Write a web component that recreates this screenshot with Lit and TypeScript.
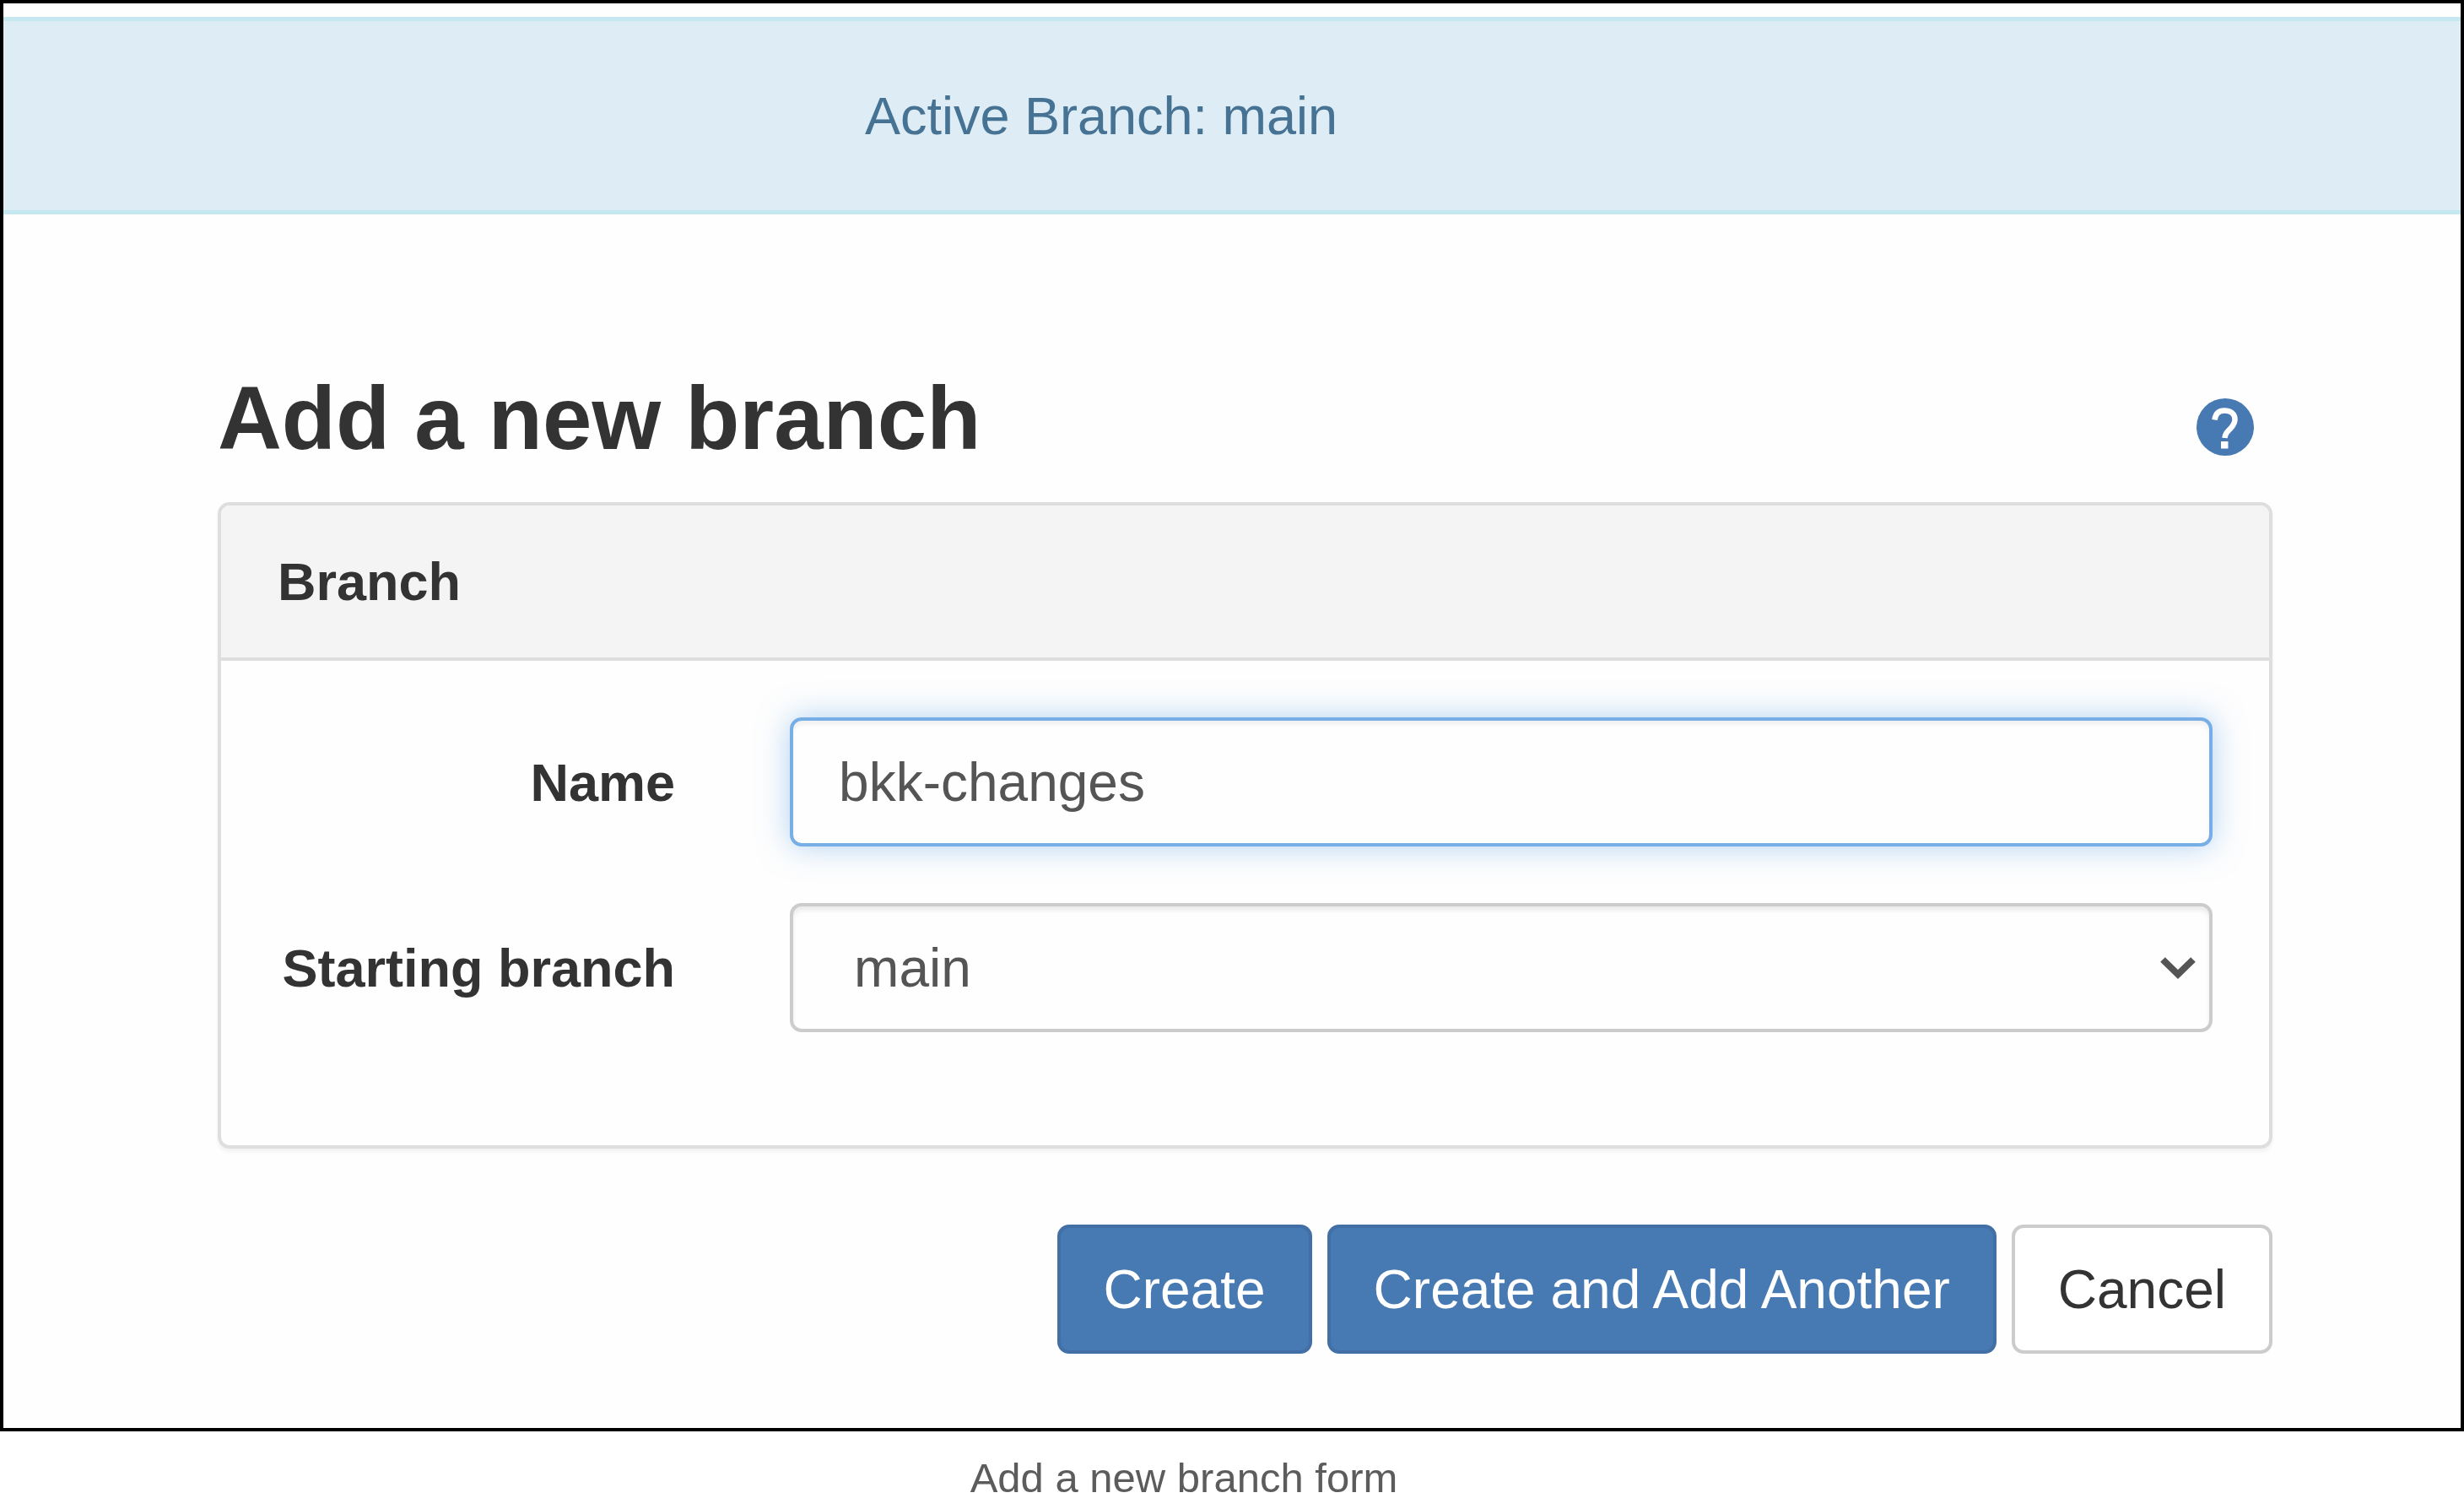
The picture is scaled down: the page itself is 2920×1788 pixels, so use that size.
import { LitElement, html, css } from "lit";
import { customElement, state } from "lit/decorators.js";

@customElement("app-root")
export class AppRoot extends LitElement {
  static styles = css`
    :host {
      display: block;
      font-family: "Liberation Sans", Arial, sans-serif;
      font-size: 63px;
      line-height: 90px;
      color: #333;
      background: #fff;
    }
    * {
      box-sizing: border-box;
    }
    .figure {
      margin: 0;
    }
    .frame {
      border: 4px solid #000;
      padding-top: 16px;
      background: #fefefe;
    }
    .banner {
      padding: 67px 310px 67px 0;
      border: solid #c5e8f0;
      border-width: 5px 0;
      background: #deecf5;
      color: #467293;
      text-align: center;
    }
    .content {
      padding: 184px 223px 88px 254px;
    }
    .title-row {
      display: flex;
      justify-content: space-between;
      align-items: flex-end;
      padding-right: 22px;
      margin-bottom: 41px;
    }
    .title {
      margin: 0;
      font-size: 105px;
      line-height: 116px;
      font-weight: 700;
    }
    .help {
      display: block;
      height: 68px;
      margin-bottom: 14px;
      color: #4779b3;
    }
    .help svg {
      display: block;
    }
    .panel {
      border: 4px solid #dedede;
      border-radius: 14px;
      box-shadow: 0 4px 4px rgba(0, 0, 0, 0.05);
    }
    .panel-heading {
      padding: 45px 67px;
      border-bottom: 4px solid #dedede;
      border-radius: 10px 10px 0 0;
      background: #f4f4f4;
      font-weight: 700;
    }
    .panel-body {
      display: flex;
      flex-direction: column;
      gap: 67px;
      padding: 67px 67px 134px;
    }
    .field {
      display: grid;
      grid-template-columns: 19fr 68fr;
      column-gap: 136px;
      align-items: center;
    }
    .label {
      text-align: right;
      font-weight: 700;
      white-space: nowrap;
    }
    .control {
      display: block;
      width: 100%;
      height: 153px;
      margin: 0;
      padding: 0 54px;
      border: 4px solid #ccc;
      border-radius: 14px;
      background: #fefefe;
      box-shadow: inset 0 5px 5px rgba(0, 0, 0, 0.075);
      color: #555;
      font: inherit;
      font-size: 64px;
      outline: none;
      appearance: none;
    }
    .control.active {
      border-color: #78aee6;
      box-shadow:
        inset 0 5px 5px rgba(0, 0, 0, 0.05),
        0 0 36px rgba(102, 165, 230, 0.5);
    }
    .select-wrap {
      position: relative;
    }
    .select-wrap .control {
      padding: 0 90px 0 72px;
    }
    .chevron {
      position: absolute;
      right: 19px;
      top: 63px;
      pointer-events: none;
    }
    .actions {
      display: flex;
      justify-content: flex-end;
      gap: 18px;
      margin-top: 90px;
    }
    .btn {
      height: 153px;
      margin: 0;
      padding: 0 51px;
      border: 4px solid #ccc;
      border-radius: 14px;
      background: #fff;
      color: #333;
      font: inherit;
      font-size: 64px;
      white-space: nowrap;
    }
    .btn.primary {
      border-color: #426fa5;
      background: #4779b3;
      color: #fff;
    }
    .caption {
      padding: 25px 114px 0 0;
      font-size: 49px;
      line-height: 60px;
      color: #5c5c5c;
      text-align: center;
    }
  `;

  @state() private name = "bkk-changes";

  render() {
    return html`
      <figure class="figure">
        <div class="frame">
          <div class="banner">Active Branch: main</div>
          <form class="content" @submit=${(e: Event) => e.preventDefault()}>
            <div class="title-row">
              <h1 class="title">Add a new branch</h1>
              <a class="help" href="#help" aria-label="Help">
                <svg width="68" height="68" viewBox="0 0 68 68" aria-hidden="true">
                  <circle cx="34" cy="34" r="34" fill="currentColor" />
                  <path
                    d="M21.500 25.500C22.500 17.500 27 14.500 33 14.500C40 14.500 45.500 18 45.500 25C45.500 30 43 33 39.500 36.500C36 40 34 42 33.500 47"
                    fill="none"
                    stroke="#fff"
                    stroke-width="6.500"
                  />
                  <rect x="29" y="51" width="8.500" height="8.500" fill="#fff" />
                </svg>
              </a>
            </div>
            <section class="panel">
              <div class="panel-heading">Branch</div>
              <div class="panel-body">
                <div class="field">
                  <label class="label" for="name">Name</label>
                  <input
                    class="control active"
                    id="name"
                    type="text"
                    .value=${this.name}
                    @input=${(e: Event) => (this.name = (e.target as HTMLInputElement).value)}
                  />
                </div>
                <div class="field">
                  <label class="label" for="start">Starting branch</label>
                  <div class="select-wrap">
                    <select class="control" id="start">
                      <option>main</option>
                    </select>
                    <svg class="chevron" width="44" height="32" viewBox="0 0 44 32" aria-hidden="true">
                      <path d="M4 4L22 21.500L40 4" fill="none" stroke="#555" stroke-width="8" />
                    </svg>
                  </div>
                </div>
              </div>
            </section>
            <div class="actions">
              <button class="btn primary" type="submit">Create</button>
              <button class="btn primary" type="submit">Create and Add Another</button>
              <button class="btn" type="button">Cancel</button>
            </div>
          </form>
        </div>
        <figcaption class="caption">Add a new branch form</figcaption>
      </figure>
    `;
  }
}
